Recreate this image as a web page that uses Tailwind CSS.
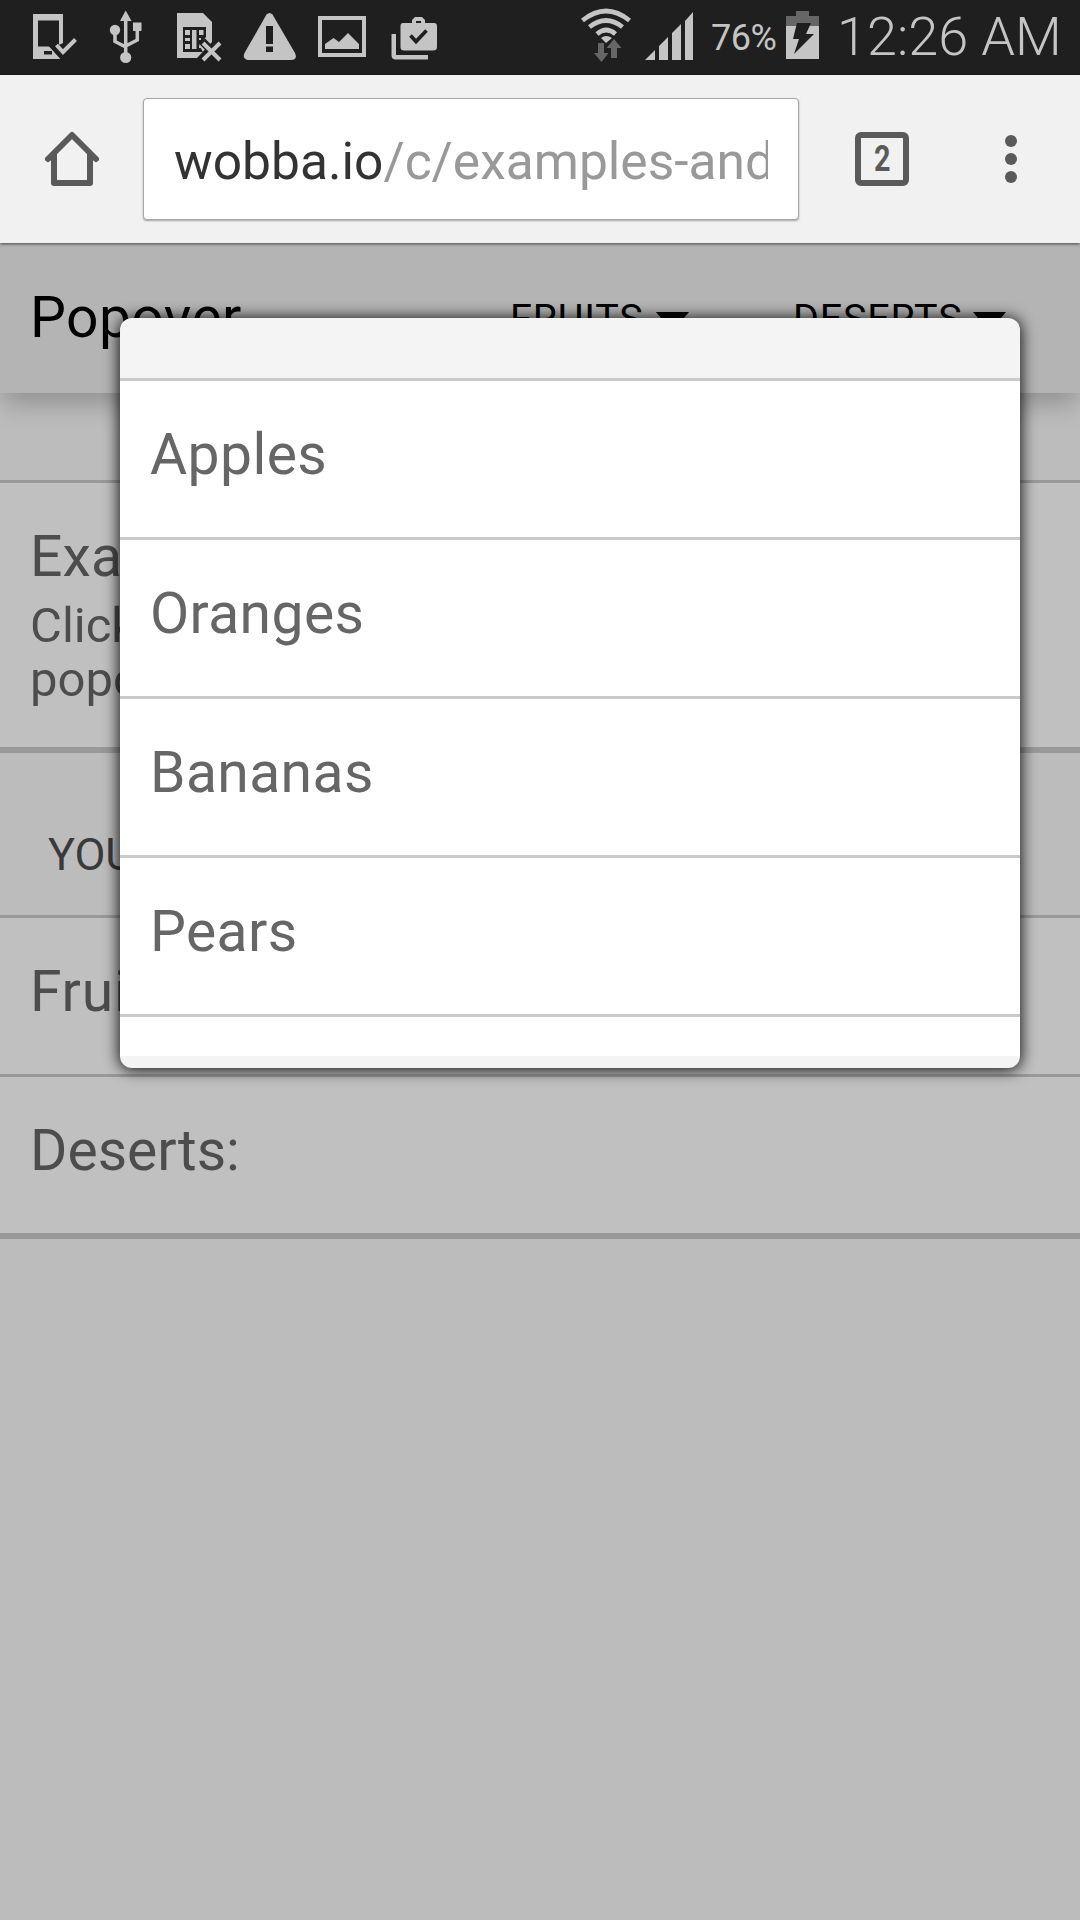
<!DOCTYPE html>
<html lang="en">
<head>
<meta charset="utf-8">
<title>Popover</title>
<script src="https://cdn.jsdelivr.net/npm/@tailwindcss/browser@4"></script>
</head>
<body class="w-[1080px] h-[1920px] overflow-hidden bg-[#bcbcbc] font-['Roboto',sans-serif]">
<div class="relative flex h-[1920px] w-[1080px] flex-col overflow-hidden">
  <!-- Status bar -->
  <header class="flex h-[75px] shrink-0 items-center bg-[#1f1f1f] text-[#c4c4c4]">
    <svg class="h-[75px] w-[460px] shrink-0" viewBox="0 0 460 75" fill="#c4c4c4">
      <path fill-rule="evenodd" d="M33 14H63V43L55 47L61 59H33ZM38 20.500V46.500H59V20.500Z"/>
      <path d="M50 46L55 46L62 59H50Z"/><path fill="#1f1f1f" d="M44 51H52V54.500H44Z"/>
      <path fill="none" stroke="#1f1f1f" stroke-width="9" d="M52 43L62 54L77 38"/>
      <path fill="none" stroke="#c4c4c4" stroke-width="4" d="M56.500 45L63 52L75.500 39.500"/>
      <path d="M125.700 10.500L131.500 21H120Z"/><circle cx="115" cy="30" r="5.200"/><rect x="133" y="22.500" width="8.500" height="8.500"/><circle cx="125.700" cy="57.500" r="5.600"/>
      <path fill="none" stroke="#c4c4c4" stroke-width="3.500" d="M125.700 18V56M115 30V41.500L125.700 47M137.300 29V40L125.700 46"/>
      <path d="M177 13H203L212 22V42L197 58H177Z"/><path fill="#1f1f1f" d="M183 27H206V37L199 45L203 52H183Z"/>
      <path d="M185 30h5v5h-5zM185 38h5v3h-5zM185 44h5v5h-5zM192 30h4.500v19H192zM199 30h4.500v5H199zM199 38h2v2h-2zM199 46h2v2h-2z"/>
      <path stroke="#1f1f1f" stroke-width="8" d="M202 41L223 63M223 40L200 63"/>
      <path stroke="#c4c4c4" stroke-width="4" d="M203 43L220 60M220 43L203 60"/>
      <path d="M266.500 14.500Q269.500 11.500 272.500 14.500L295 53Q298 60 291 60H248Q242 59 244.500 53Z"/><path fill="#1f1f1f" d="M266 26h7v18h-7zM266 46.500h7V52h-7z"/>
      <path fill-rule="evenodd" d="M318 16H366V57H318ZM322 20V53H362V20Z"/><path d="M325 49V44L333.500 38L339 42L348 33L359 44V49Z"/>
      <path fill-rule="evenodd" d="M403 23H412V20L415 17H422L425 20V23H434Q437 23 437 26V47Q437 50.500 433 50.500H404Q400.500 50.500 400.500 47V26Q400.500 23 403 23ZM416 21V23H421V21Z"/>
      <path fill="none" stroke="#1f1f1f" stroke-width="3.600" d="M410.500 35.500L416 41.500L426.500 30.500"/>
      <path d="M391.500 34H396V55H428V59.500H395Q391.500 59 391.500 55Z"/>
    </svg>
    <svg class="ml-[100px] h-[75px] w-[140px] shrink-0" viewBox="560 0 140 75" fill="#c4c4c4">
      <path fill="none" stroke="#c4c4c4" stroke-width="4.700" d="M582.500 20.500Q606 1.500 629.500 20.500M589.500 27Q606 14 622.500 27M597 34Q606 26 615.500 34"/>
      <path d="M601 38Q606 34 612 38L606 43Z"/>
      <path fill="#666" d="M598 43h6v10h4.500L601.500 62L594 53h4zM611 58V48H606.500L614 39L621.500 48H617V58Z"/>
      <path d="M645 60L655 50V60ZM659 60V46L668 37V60ZM672 60V33L681 24V60ZM685 60V21L693 12V60Z"/>
    </svg>
    <span class="w-[80px] shrink-0 pl-[11px] whitespace-nowrap text-[36px] tracking-[-0.5px]">76%</span>
    <svg class="h-[75px] w-[45px] shrink-0" viewBox="780 0 45 75"><path fill="#666" d="M786 26V16H796V11H809V16H819V26Z"/><path fill="#c4c4c4" d="M786 26H819V59H786Z"/><path fill="#1f1f1f" d="M797 23H811L806 34H814L794 54L799 39H793Z"/></svg>
    <span class="pb-[2px] pl-[12px] whitespace-nowrap text-[54px] font-light">12:26 AM</span>
  </header>
  <!-- Browser toolbar -->
  <nav class="relative z-10 flex h-[168px] shrink-0 items-start bg-[#f1f1f1] shadow-[0_1px_3px_#0009]">
    <svg class="mt-[50px] ml-[36px] h-[72px] w-[72px] shrink-0" viewBox="36 125 72 72" fill="none" stroke="#5a5a5a" stroke-width="6" stroke-linejoin="round" stroke-linecap="round"><path d="M48 159L72 135L96 159M54 155V183H90V155"/></svg>
    <div class="mt-[23px] ml-[35px] flex h-[122px] w-[656px] shrink-0 items-center rounded-[4px] border border-[#a8a8a8] bg-white pr-[30px] pl-[30px] shadow-[0_1px_2px_#0005]">
      <div class="w-[594px] overflow-hidden pt-[5px] whitespace-nowrap text-[51.5px] text-[#999]"><span class="text-[#333]">wobba.io</span>/c/examples-and</div>
    </div>
    <div class="mt-[57px] ml-[56px] flex size-[54px] shrink-0 items-center justify-center rounded-[6px] border-[6px] border-[#5a5a5a] text-[36px] font-bold text-[#5a5a5a]"><span class="scale-x-80">2</span></div>
    <div class="mt-[60px] ml-[96px] flex flex-col gap-[6px]"><i class="size-3 rounded-full bg-[#5a5a5a]"></i><i class="size-3 rounded-full bg-[#5a5a5a]"></i><i class="size-3 rounded-full bg-[#5a5a5a]"></i></div>
  </nav>
  <!-- App bar -->
  <section class="relative z-[5] flex h-[150px] shrink-0 items-center bg-[#b4b4b4] text-black shadow-[0_14px_24px_-3px_#0000003a]">
    <h1 class="w-[510px] pl-[30px] text-[57px] tracking-[0.4px]">Popover</h1>
    <div class="flex w-[283px] items-center text-[39.5px] tracking-[0.8px]"><span class="w-[146px] pt-[2px]">FRUITS</span><svg class="mt-2 h-[20px] w-[33px]" viewBox="0 0 33 20"><path d="M0 0H33L16.500 20Z"/></svg></div>
    <div class="flex items-center text-[39.5px] tracking-[0.8px]"><span class="w-[180px] pt-[2px]">DESERTS</span><svg class="mt-2 h-[20px] w-[33px]" viewBox="0 0 33 20"><path d="M0 0H33L16.500 20Z"/></svg></div>
  </section>
  <!-- Page content -->
  <main class="flex flex-col text-[57px] text-[#4d4d4d]">
    <div class="h-[87px]"></div>
    <section class="h-[273px] border-t-[3px] border-b-[6px] border-[#999] bg-[#c0c0c0] px-[30px] pt-[40px]">
      <h2 class="leading-[67px] tracking-[0.2px]">Example</h2>
      <p class="pt-[9px] text-[49px] leading-[54px]">Click the buttons to show<br>popovers</p>
    </section>
    <h3 class="h-[162px] pt-[75px] pl-[48px] text-[45px] leading-[54px] text-[#3a3a3a]">YOUR SELECTION</h3>
    <div class="flex h-[159px] items-center border-t-[3px] border-[#999] bg-[#c0c0c0] pb-[8px] pl-[30px] tracking-[0.8px]">Fruits:</div>
    <div class="flex h-[165px] items-center border-t-[3px] border-b-[6px] border-[#999] bg-[#c0c0c0] pb-[8px] pl-[30px]">Deserts:</div>
  </main>
  <!-- Popover -->
  <div class="absolute top-[318px] left-[120px] z-20 flex h-[750px] w-[900px] flex-col overflow-hidden rounded-[12px] bg-[#f4f4f4] text-[57px] tracking-[0.4px] text-[#666] shadow-[0_1px_15px_1px_#000e]">
    <div class="h-[60px] shrink-0"></div>
    <ul class="h-[678px] bg-white">
      <li class="flex h-[159px] items-center border-t-[3px] border-[#cacaca] pb-[8px] pl-[30px]">Apples</li>
      <li class="flex h-[159px] items-center border-t-[3px] border-[#cacaca] pb-[8px] pl-[30px]">Oranges</li>
      <li class="flex h-[159px] items-center border-t-[3px] border-[#cacaca] pb-[8px] pl-[30px]">Bananas</li>
      <li class="flex h-[159px] items-center border-t-[3px] border-[#cacaca] pb-[8px] pl-[30px]">Pears</li>
      <li class="h-[42px] border-t-[3px] border-[#cacaca]"></li>
    </ul>
    <div class="h-[12px] shrink-0"></div>
  </div>
</div>
</body>
</html>
